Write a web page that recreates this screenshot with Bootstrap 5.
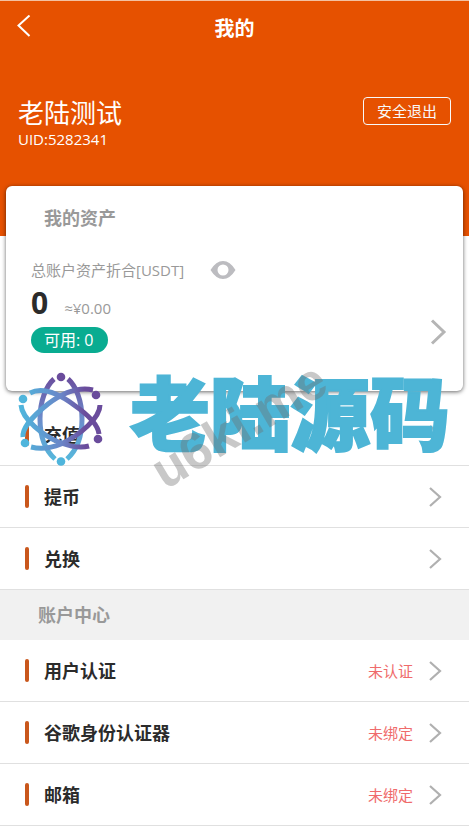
<!DOCTYPE html>
<html lang="zh-CN">
<head>
<meta charset="utf-8">
<meta name="viewport" content="width=device-width, initial-scale=1">
<title>我的</title>
<link href="https://cdn.jsdelivr.net/npm/bootstrap@5.3.0/dist/css/bootstrap.min.css" rel="stylesheet">
<style>
body{font-family:"Open Sans","Noto Sans CJK SC",sans-serif;font-size:15px;line-height:20px;color:#2b2b2b;overflow-x:hidden}
.hero{background:#e65100;border-top:1px solid #f3c1a2;padding-bottom:87px}
.topbar{display:grid;grid-template-columns:48px 1fr 48px;height:56px;margin-bottom:40px;padding-top:14px}
.topbar h1{font-size:20px;line-height:28px;font-weight:700}
.profile{padding:0 18px}
.user-name{font-size:26px;line-height:32px}
.btn-exit{--bs-btn-padding-y:3px;--bs-btn-padding-x:13px;--bs-btn-font-size:15px;--bs-btn-line-height:20px;--bs-btn-border-radius:4px}
.assets{margin:-50px 6px 0;border:0;border-radius:6px;box-shadow:0 1px 4px rgba(0,0,0,.6);padding:20px 16px 38px 25px}
.assets .heading-text{padding-left:13px;margin-bottom:30px}
.heading-text{font-size:18px;line-height:24px;font-weight:700;color:#999}
.muted-text{color:#999}
.eye-btn{margin-left:26px}
.amount-line{margin:5px 0 6px}
.amount{font-size:30px;line-height:36px;font-weight:700}
.avail{background:#09ac91;font-size:16px;line-height:26px;padding:0 14px 0 13px}
.menu-row{height:62px;border-bottom:1px solid #e0e0e0;padding:0 27px 0 25px;color:#2b2b2b}
.menu-row .bar{width:4px;height:23px;border-radius:2px;background:#c9571c;margin-right:15px}
.menu-row .label-text{font-size:18px;line-height:24px;font-weight:700}
.status{color:#ef6b6b;margin-right:15px}
.section-title{background:#f1f1f1;padding:13px 38px}
.first-list{padding-top:13px;position:relative}
.brand{position:absolute;left:18px;top:-20px;pointer-events:none}
.brand-name{font-size:80px;line-height:84px;font-weight:900;color:#4db5d6;-webkit-text-stroke:2px #4db5d6;margin-left:26px;white-space:nowrap}
.stamp{position:absolute;left:142px;top:8px;font:bold 52px/52px "Liberation Sans",Arial,sans-serif;color:rgba(110,110,110,.38);transform:rotate(-31deg);pointer-events:none}
</style>
<script src="https://cdn.jsdelivr.net/npm/bootstrap@5.3.0/dist/js/bootstrap.bundle.min.js"></script>
</head>
<body>
<header class="hero text-white">
  <div class="topbar">
    <a href="#" class="d-block ps-3 text-white" aria-label="返回"><svg class="d-block" width="16" height="22" viewBox="0 0 16 22" fill="none" stroke="currentColor" stroke-width="2"><path d="M13.500 0.500L2.500 10.500L13.500 21"/></svg></a>
    <h1 class="m-0 text-center">我的</h1>
  </div>
  <div class="profile d-flex justify-content-between align-items-start">
    <div><div class="user-name">老陆测试</div><div>UID:5282341</div></div>
    <button type="button" class="btn btn-outline-light btn-exit">安全退出</button>
  </div>
</header>
<main>
  <section class="card assets">
    <h2 class="heading-text">我的资产</h2>
    <div class="d-flex justify-content-between align-items-end">
      <div>
        <div class="d-flex align-items-center"><span class="muted-text">总账户资产折合[USDT]</span>
          <button type="button" class="btn p-0 border-0 eye-btn" aria-label="显示余额"><svg class="d-block" width="26" height="20" viewBox="0 0 26 20"><path fill="#bcbcc0" fill-rule="evenodd" d="M0.500 10Q6 1 13 1T25.500 10Q20 19 13 19T0.500 10ZM13 4.500a5.500 5.500 0 1 0 0 11a5.500 5.500 0 1 0 0-11Z"/></svg></button></div>
        <div class="amount-line d-flex align-items-baseline"><span class="amount">0</span><span class="muted-text ms-3">≈¥0.00</span></div>
        <span class="avail d-inline-block rounded-pill text-white">可用: 0</span>
      </div>
      <a href="#" class="pb-2" aria-label="资产详情"><svg class="d-block" width="18" height="26" viewBox="0 0 18 26" fill="none" stroke="#b5b5b5" stroke-width="3"><path d="M3 1.500L15 13L3 24.500"/></svg></a>
    </div>
  </section>
  <svg class="d-none"><defs><symbol id="chev" viewBox="0 0 14 20"><path d="M2 1L12 10L2 19" fill="none" stroke="#b0b0b0" stroke-width="2.200"/></symbol></defs></svg>
  <nav class="first-list">
    <a href="#" class="menu-row d-flex align-items-center text-decoration-none"><span class="bar"></span><span class="label-text flex-grow-1">充值</span><svg width="14" height="20"><use href="#chev"/></svg></a>
    <a href="#" class="menu-row d-flex align-items-center text-decoration-none"><span class="bar"></span><span class="label-text flex-grow-1">提币</span><svg width="14" height="20"><use href="#chev"/></svg></a>
    <a href="#" class="menu-row d-flex align-items-center text-decoration-none"><span class="bar"></span><span class="label-text flex-grow-1">兑换</span><svg width="14" height="20"><use href="#chev"/></svg></a>
    <div class="brand d-flex align-items-start">
      <svg class="flex-shrink-0" width="86" height="96" viewBox="0 0 86 96" fill="none" stroke-width="5">
        <defs>
          <linearGradient id="g1" gradientUnits="userSpaceOnUse" x1="0" y1="5" x2="0" y2="90"><stop offset="0" stop-color="#6a4c9c"/><stop offset=".5" stop-color="#6c8ccb"/><stop offset="1" stop-color="#55b9dc"/></linearGradient>
          <linearGradient id="g2" gradientUnits="userSpaceOnUse" x1="3" y1="0" x2="83" y2="0"><stop offset="0" stop-color="#4fb5dc"/><stop offset=".5" stop-color="#6a86c8"/><stop offset=".8" stop-color="#6a4c9c"/></linearGradient>
        </defs>
        <path stroke="url(#g1)" d="M36 8C28 15 22 30 22 48S28 80 37 88M50 8C58 15 64 30 64 48S58 80 49 88"/>
        <path stroke="url(#g2)" d="M12 22C22 17 37 20 56 34C69 43 80 53 81 63M3 34C4 48 25 65 43 72C54 76 64 77 71 75"/>
        <path stroke="url(#g2)" d="M75 19C62 16 46 21 30 33C16 44 4 57 5 66M82 34C82 47 62 64 43 73C31 78 21 78 13 76"/>
        <g stroke="none"><circle cx="43" cy="6" r="4.300" fill="#6a4c9c"/><circle cx="78" cy="24" r="4.300" fill="#6a4c9c"/><circle cx="80" cy="68" r="4.300" fill="#6a4c9c"/><circle cx="5" cy="28" r="4.300" fill="#4fb5dc"/><circle cx="7" cy="72" r="4.300" fill="#4fb5dc"/><circle cx="43" cy="90.500" r="4.300" fill="#4fb5dc"/></g>
      </svg>
      <span class="brand-name">老陆源码</span>
    </div>
    <div class="stamp">u6ki.me</div>
  </nav>
  <h2 class="section-title heading-text m-0">账户中心</h2>
  <nav>
    <a href="#" class="menu-row d-flex align-items-center text-decoration-none"><span class="bar"></span><span class="label-text flex-grow-1">用户认证</span><span class="status">未认证</span><svg width="14" height="20"><use href="#chev"/></svg></a>
    <a href="#" class="menu-row d-flex align-items-center text-decoration-none"><span class="bar"></span><span class="label-text flex-grow-1">谷歌身份认证器</span><span class="status">未绑定</span><svg width="14" height="20"><use href="#chev"/></svg></a>
    <a href="#" class="menu-row d-flex align-items-center text-decoration-none"><span class="bar"></span><span class="label-text flex-grow-1">邮箱</span><span class="status">未绑定</span><svg width="14" height="20"><use href="#chev"/></svg></a>
  </nav>
</main>
</body>
</html>
